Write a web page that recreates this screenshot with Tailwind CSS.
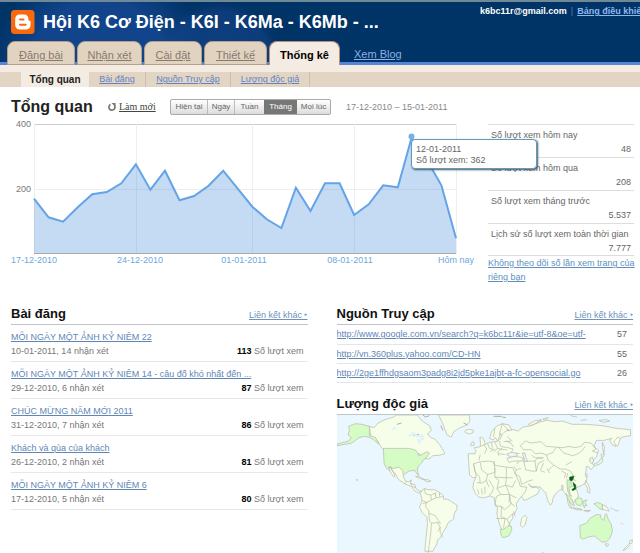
<!DOCTYPE html>
<html lang="vi">
<head>
  <meta charset="UTF-8">
  <meta name="viewport" content="width=device-width, initial-scale=1.0">
  <title>Hội K6 Cơ Điện - Thống kê</title>
  <script src="https://cdn.jsdelivr.net/npm/@tailwindcss/browser@4"></script>
</head>
<body class="bg-white font-['Liberation_Sans',Arial,sans-serif] text-[9px] leading-[14px] text-[#666] overflow-x-hidden">

  <!-- Header -->
  <header class="bg-[#003366] bg-[radial-gradient(circle_at_100px_70px,#11448a_0,#11448a_70px,transparent_110px),radial-gradient(circle_at_220px_60px,#0e4080_0,#0c3c7a_50px,transparent_60px)] border-t-2 border-[#6f8a96]">
    <div class="flex h-[39px] pl-[11px]">
      <div class="flex flex-1 items-center gap-2 min-w-0 whitespace-nowrap">
        <svg class="w-6 h-6 shrink-0" viewBox="0 0 24 24" aria-hidden="true">
          <rect x="0" y="0" width="23.500" height="24" rx="3.500" fill="#f96a0e"/>
          <path d="M8.500 4.500h4.500c2.700 0 4.400 1.900 4.400 4.200 0 1.500.2 2 1.200 2 .8.100 1 .5 1 1.200v3c0 2.700-1.900 4.600-4.600 4.600H8.700c-2.700 0-4.500-1.900-4.500-4.600V9c0-2.600 1.800-4.500 4.300-4.500z" fill="#fff"/>
          <path d="M9 9.500h3.500M9 14.800h5.700" stroke="#f96a0e" stroke-width="2" stroke-linecap="round"/>
        </svg>
        <h1 class="text-[18px] leading-6 font-bold text-white">Hội K6 Cơ Điện - K6I - K6Ma - K6Mb - ...</h1>
      </div>
      <div class="flex gap-1 w-40 pt-[2px] overflow-hidden whitespace-nowrap font-bold text-white">k6bc11r@gmail.com <span class="font-normal text-[#5c7fa8]">|</span> <a href="#" class="text-[#8fb8ee] underline">Bảng điều khiển</a></div>
    </div>

    <nav class="flex gap-[2px] h-6 pl-[7px] border-b-[3px] border-[#5b84d6] text-[11px]">
      <a href="#" class="h-6 w-[68px] rounded-t-lg bg-[#e2d3c0] border border-[#b5a08c] text-center leading-[26px] text-[#857a70] underline">Đăng bài</a>
      <a href="#" class="h-6 w-[65px] rounded-t-lg bg-[#e2d3c0] border border-[#b5a08c] text-center leading-[26px] text-[#857a70] underline">Nhận xét</a>
      <a href="#" class="h-6 w-[58px] rounded-t-lg bg-[#e2d3c0] border border-[#b5a08c] text-center leading-[26px] text-[#857a70] underline">Cài đặt</a>
      <a href="#" class="h-6 w-[63px] rounded-t-lg bg-[#e2d3c0] border border-[#b5a08c] text-center leading-[26px] text-[#857a70] underline">Thiết kế</a>
      <a href="#" class="h-6 w-[71px] rounded-t-lg bg-[#f4ebe2] border border-b-0 border-[#b5917c] text-center leading-[26px] font-bold text-black">Thống kê</a>
      <a href="#" class="ml-3 leading-[27px] text-[#8fb0e4] underline">Xem Blog</a>
    </nav>
  </header>

  <nav class="bg-[#f4ebe2] pt-[7px]">
    <div class="flex h-[15px] pl-[21px] bg-[#e2d5c3] leading-[15px]">
      <a href="#" class="w-[68px] text-center bg-[#f4ebe2] font-bold text-[10px] text-[#222]">Tổng quan</a>
      <a href="#" class="w-[57px] text-center border-r border-[#cdbfae] text-[#6483c4] underline">Bài đăng</a>
      <a href="#" class="w-[85px] text-center border-r border-[#cdbfae] text-[#6483c4] underline">Nguồn Truy cập</a>
      <a href="#" class="w-[79px] text-center border-r border-[#cdbfae] text-[#6483c4] underline">Lượng độc giả</a>
    </div>
  </nav>

  <main>
    <!-- Title and range -->
    <div class="flex items-center h-[37px] pt-[2px] pl-[11px]">
      <h2 class="w-[97px] text-[16px] leading-5 font-bold text-[#222]">Tổng quan</h2>
      <a href="#" class="flex items-center gap-[3px] w-[62px] font-['Liberation_Serif',serif] text-[10px] text-[#444]">
        <svg class="w-2 h-2" viewBox="0 0 8 8" aria-hidden="true">
          <path d="M2.500 1.500A3 3 0 1 0 6.300 2.300" fill="none" stroke="#777" stroke-width="1.700"/>
          <path d="M3.500 0h4v4z" fill="#777"/>
        </svg>
        <span class="underline">Làm mới</span>
      </a>
      <div class="flex h-4 w-[161px] border border-[#aaa] rounded-xs bg-linear-to-b from-white to-[#ddd] text-[8px] leading-[14px] text-[#666]">
        <button type="button" class="w-9 whitespace-nowrap">Hiện tại</button>
        <button type="button" class="w-[27px] border-l border-[#bbb]">Ngày</button>
        <button type="button" class="w-[30px] border-l border-[#bbb]">Tuần</button>
        <button type="button" class="w-[33px] bg-[#777] text-white">Tháng</button>
        <button type="button" class="flex-1 whitespace-nowrap">Mọi lúc</button>
      </div>
      <span class="ml-[15px] text-[#888]">17-12-2010 – 15-01-2011</span>
    </div>

    <!-- Chart and totals -->
    <div class="flex pl-[11px] pr-[2px] gap-[14px]">
      <div class="relative flex-1 min-w-0">
        <svg class="block w-full overflow-visible" viewBox="11 124 463 143" font-family="Liberation Sans, Arial, sans-serif" font-size="9">
          <path d="M34 124.500H456" stroke="#ccc"/>
          <path d="M34 189.500H456M34.500 124V254M136.500 124V254M252.500 124V254M354.500 124V254M456.500 124V254" stroke="#eee" fill="none"/>
          <path d="M34 198.700L48.600 217.300 63.100 221.700 77.700 207.300 92.200 194.300 106.800 192 121.300 183.300 135.900 164.300 150.400 189.700 165 170.700 179.500 200.300 194.100 196 208.600 185.700 223.200 170.700 237.700 188.700 252.300 206.700 266.800 219.300 281.400 228 295.900 187.700 310.500 211 325 183.300 339.600 183.300 354.100 215 368.700 204.300 383.200 185.300 397.800 187.300 411.500 138 426.900 160 441.400 185.300 456 238.300V254H34z" fill="#4a90dc" fill-opacity=".32"/>
          <path d="M34 198.700L48.600 217.300 63.100 221.700 77.700 207.300 92.200 194.300 106.800 192 121.300 183.300 135.900 164.300 150.400 189.700 165 170.700 179.500 200.300 194.100 196 208.600 185.700 223.200 170.700 237.700 188.700 252.300 206.700 266.800 219.300 281.400 228 295.900 187.700 310.500 211 325 183.300 339.600 183.300 354.100 215 368.700 204.300 383.200 185.300 397.800 187.300 411.500 138 426.900 160 441.400 185.300 456 238.300" fill="none" stroke="#64a4e6" stroke-width="2"/>
          <path d="M34 253.500H456" stroke="#aaa"/>
          <circle cx="411.500" cy="136.500" r="3" fill="#74b0ea"/>
          <g fill="#777" text-anchor="end">
            <text x="31" y="127">400</text>
            <text x="31" y="192">200</text>
          </g>
          <g fill="#6fa8dc" text-anchor="middle">
            <text x="34" y="263">17-12-2010</text>
            <text x="140" y="263">24-12-2010</text>
            <text x="244" y="263">01-01-2011</text>
            <text x="350" y="263">08-01-2011</text>
            <text x="456" y="263">Hôm nay</text>
          </g>
        </svg>
        <div class="absolute z-10 left-[400px] top-[15px] w-[126px] h-[30px] pl-1 pt-[4px] bg-white border border-[#5f9cb8] rounded-sm shadow-[1px_1px_2px_#456] leading-[11px] text-[#666]">
          <p>12-01-2011</p>
          <p>Số lượt xem: 362</p>
        </div>
      </div>

      <aside class="w-[150px]">
        <dl class="mr-1">
          <div class="h-[33px] pt-[3px] px-[3px] border-t border-[#ddd]"><dt>Số lượt xem hôm nay</dt><dd class="text-right">48</dd></div>
          <div class="h-[33px] pt-[3px] px-[3px] border-t border-[#ddd]"><dt>Số lượt xem hôm qua</dt><dd class="text-right">208</dd></div>
          <div class="h-[33px] pt-[3px] px-[3px] border-t border-[#ddd]"><dt>Số lượt xem tháng trước</dt><dd class="text-right">5.537</dd></div>
          <div class="h-[33px] pt-[3px] px-[3px] border-y border-[#ddd]"><dt>Lịch sử số lượt xem toàn thời gian</dt><dd class="text-right">7.777</dd></div>
        </dl>
        <a href="#" class="block text-[#5f8fc0] underline">Không theo dõi số lần xem trang của riêng bạn</a>
      </aside>
    </div>

    <div class="flex gap-[29px] pl-[11px] pr-[7px] pt-[21px]">
      <!-- Posts -->
      <section class="flex-1 min-w-0">
        <div class="flex items-end justify-between h-5 pb-[2px] border-b border-[#bcc6ca]">
          <h3 class="text-[13px] leading-4 font-bold text-[#111]">Bài đăng</h3>
          <a href="#" class="text-[#6d93b8] underline">Liên kết khác ‣</a>
        </div>
        <ul>
          <li class="h-[37px] pt-[5px] border-b border-[#e8e8e8]">
            <a href="#" class="block text-[#5f87b5] underline">MỖI NGÀY MỘT ẢNH KỶ NIỆM 22</a>
            <p class="flex justify-between pr-1 text-[#777]"><span>10-01-2011, 14 nhận xét</span><span><b class="text-black">113</b> Số lượt xem</span></p>
          </li>
          <li class="h-[37px] pt-[5px] border-b border-[#e8e8e8]">
            <a href="#" class="block text-[#5f87b5] underline">MỖI NGÀY MỘT ẢNH KỶ NIỆM 14 - câu đố khó nhất đến ...</a>
            <p class="flex justify-between pr-1 text-[#777]"><span>29-12-2010, 6 nhận xét</span><span><b class="text-black">87</b> Số lượt xem</span></p>
          </li>
          <li class="h-[37px] pt-[5px] border-b border-[#e8e8e8]">
            <a href="#" class="block text-[#5f87b5] underline">CHÚC MỪNG NĂM MỚI 2011</a>
            <p class="flex justify-between pr-1 text-[#777]"><span>31-12-2010, 7 nhận xét</span><span><b class="text-black">86</b> Số lượt xem</span></p>
          </li>
          <li class="h-[37px] pt-[5px] border-b border-[#e8e8e8]">
            <a href="#" class="block text-[#5f87b5] underline">Khách và qùa của khách</a>
            <p class="flex justify-between pr-1 text-[#777]"><span>26-12-2010, 2 nhận xét</span><span><b class="text-black">81</b> Số lượt xem</span></p>
          </li>
          <li class="h-[37px] pt-[5px] border-b border-[#e8e8e8]">
            <a href="#" class="block text-[#5f87b5] underline">MỖI NGÀY MỘT ẢNH KỶ NIỆM 6</a>
            <p class="flex justify-between pr-1 text-[#777]"><span>17-12-2010, 5 nhận xét</span><span><b class="text-black">80</b> Số lượt xem</span></p>
          </li>
        </ul>
      </section>

      <section class="flex-1 min-w-0">
        <!-- Traffic sources -->
        <div class="flex items-end justify-between h-5 pb-[2px] border-b border-[#bcc6ca]">
          <h3 class="text-[13px] leading-4 font-bold text-[#111]">Nguồn Truy cập</h3>
          <a href="#" class="text-[#6d93b8] underline">Liên kết khác ‣</a>
        </div>
        <table class="w-full table-fixed">
          <tbody>
            <tr class="h-[19px] border-b border-[#e3e6e8]"><td class="overflow-hidden whitespace-nowrap"><a href="#" class="text-[#5f87b5] underline">http://www.google.com.vn/search?q=k6bc11r&amp;ie=utf-8&amp;oe=utf-</a></td><td class="w-[42px] pr-[6px] text-right">57</td></tr>
            <tr class="h-[19px] border-b border-[#e3e6e8]"><td class="overflow-hidden whitespace-nowrap"><a href="#" class="text-[#5f87b5] underline">http://vn.360plus.yahoo.com/CD-HN</a></td><td class="w-[42px] pr-[6px] text-right">55</td></tr>
            <tr class="h-[19px] border-b border-[#e3e6e8]"><td class="overflow-hidden whitespace-nowrap"><a href="#" class="text-[#5f87b5] underline">http://2ge1ffhdgsaom3padg8i2jd5pke1ajbt-a-fc-opensocial.go</a></td><td class="w-[42px] pr-[6px] text-right">26</td></tr>
          </tbody>
        </table>

        <!-- Audience -->
        <div class="flex items-end justify-between mt-[12px] h-5 pb-[2px] border-b border-[#bcc6ca]">
          <h3 class="text-[13px] leading-4 font-bold text-[#111]">Lượng độc giả</h3>
          <a href="#" class="text-[#6d93b8] underline">Liên kết khác ‣</a>
        </div>
        <svg class="block w-full bg-[#eaf7fe]" viewBox="0 0 888 417" stroke="#b5b5a5" stroke-width="2" stroke-linejoin="round" fill="#f6feea" role="img" aria-label="Bản đồ độc giả">
          <!-- Americas -->
          <g transform="translate(-21 -12)">
            <path d="M118 46l14 4 12-14 20-10 22-6 14-8h62l14 18 22 14 6 14-12 10 10 12 12 4 14 16 12 20 4 8-14 4-22 2-12 10-18-2-10-14-10 2-20-6-70-1-14-14-12-20-10-6-10-8z"/>
            <path d="M325 12h92l2 20-14 12-16 6-18 12-8 16-12-6-8-20-6-16-6-12z"/>
            <path d="M404 60l10-5 14 2 2 6-12 6-12-4z"/>
            <path d="M118 46l-22-6-20-2-20 8 2 12-4 14 10 8-8 10-35 9v5l44-8 22-16 16-4 15 3 14 8 14 12-10-20-18-5z" fill="#d6fcc6"/>
            <path d="M160 112h78l20 6 8 16 10-4 14-8 8 4-8 12-10 8-6 10-10 10-2 12 4 16-6-6-6-10-18 2-14 10-10-8-12-4-20 2-12-10-6-14z" fill="#d6fcc6"/>
            <path d="M176 168l14 4 16-4 12 10 2 20 6 12 10 2 8-6-4 12 14 2 4 14 10 6 6 0-8 6-12-6-10-14-20-8-20-14-8-16-12-12-2-8zM176 168l4 14 12 16 2-6-12-24zM256 196l14 2 14 8-10-2zM282 206l12 0 8 4-12 2z"/>
            <path d="M240 212l6 12M222 218l8-6M246 226l12 4"/>
            <path d="M270 246l12-14 12 4 20 0 14 8 12 10 0 10 12 0 28 18 0 12-8 14-2 16-16 10-6 14-10 16-6 14-10 8-2 12-8 14-4 8-24 0 4-44 4-38-2-20-14-14-8-16 4-10 4-8-2-12z"/>
            <path d="M282 232l4 16 16 4 2 14-14 8-14-6M302 252l12-6 4 14 20-4M318 260l-14 6M290 274l-4 12 10 12 0 8 20 8 8 14 6 6M296 306l2 24 6 6 18-2 8 14-6 12M304 336l-2 28-4 30-4 34M330 348l0 18 8 12M322 334l10 2M290 274l-12 4M318 244l-2 8M328 244v12" fill="none"/>
            <path d="M278 12l8 6 12-4M200 40l14-4M250 74l14-4 10 8M332 44l6 14M400 36l12 6" fill="none" stroke="#888"/>
            <path d="M186 54l12-4M236 76l14-10 12 10 14-4 2 12-16 4M264 90l8 6" fill="none" stroke="#e2f2fb" stroke-width="7"/>
            <path d="M80 205h2v3h-2z"/>
          </g>

          <!-- Europe, Africa, Asia and Oceania -->
          <g transform="translate(429 -12)">
            <path d="M28 82l6-20 14-16 18-8 20 4 8 14-4 4-8-6-2 14-6 10-10-2-4-10-4 14-4 10-6-10-8 6z"/>
            <path d="M-1 78l10 4 6 16 6 8-16 4-4-8zM-28 96l8-4 2 10-10 2z"/>
            <path d="M-36 128l20 0 4-10-6-8 14-2 14-6 14-6 14-4 12 0 10-8 6-14 10-10 24-4 14 4 14-12 24-4 24-10 22-6 28 4 20-2 30 10 40 0 50 4 42 8 42 4v18l-26 4-14 16-4 12-10-4-8-12 6-8-24 6-22 0-8 18 14 12-6 20-14 12 6 16-8 10-6-8-8-2-2 18 4 14-4 16-14 10-16 6 4 10 4 14-6 14-12 6-2-10-8-4 0 10 8 22-8-6-4-14-2-18-8-10-6-8-8 0-10 10-10 14-2 14-6 8-8-14-6-24-8-6-8-10-26-2-10-8 10 12 14-2 10 8-6 12-18 10-22 10-6-8-14-26-10-14 2-12-28 2-10-6 10-6-4-4 8-2-14-4-8 12-4 4-8-10-12-12-14-2-10 6-8 4-8 8-16 2-10-8z"/>
            <path d="M-20 158l20-6 24-2 14 2 4 10 20 4 16 2 20 2 4 12 14 30 4 14 20 2-6 16-18 20-8 14 2 14-6 14-8 4 2 10-8 12-8 18-16 6-6-10-6-20-4-18 2-18-8-14-2-16-12-6-18 6-16-2-10-10-8-18 2-16 8-18z"/>
            <path d="M124 322l10-10 6 6-6 24-8 6-6-6z"/>
            <path d="M60 354l10 0 14-10 10 2 0 12-8 16-18 6-6-10z" fill="#d6fcc6"/>
            <!-- African borders -->
            <path d="M-20 158l4 24 14 16M0 154l4 22 18 14M22 190l22-6-2-34M44 170l0 28 34 2M78 168v32l20 0M22 190l-4 18-14 8-14-2M-2 198l2 18M18 208l8 20M26 206l14 24M44 198l12 10-6 24 12 18M78 200l-2 22-26 10M76 222l20 6 10-20M76 222l12 28M40 230l-6 16-8 6M62 250l-14 6-4 28M62 250h26l4 30M88 250l20 10M44 284l20 2 8 10 20-16M64 286l-2 30 18 8 20-18M48 322h26M74 322l-4 28M100 300l4 16M80 324l10 20M90 274l14 12M-8 234l4 16M4 232l2 18M14 226l0 22M88 250l-2 24" fill="none"/>
            <!-- European borders -->
            <path d="M44 52l-4 26M66 38l-8 30M66 38l20 22M10 100l10 14-8 14M22 98l6 14 14 4M34 94l2 16M44 94l8 18-12 10M58 90l2 14 16 6M66 110l-14 12 4 12M76 108l22 6-4 8M78 90l14 6 8 12M80 76l16 14M52 112l16 4 12 0M54 128l20 2M30 122l12-8M0 130l-4 18M70 92l22-2" fill="none"/>
            <!-- Asian borders -->
            <path d="M130 116l-10-12 16-14 16 6 30-4 14 14 30 2 20 2 20-4 16 4 20-4 10-12 20 2 14 18-10 6 16 6M234 108l16 18 28 8 18-8 10-8 8-12M228 108l-10 16-20 8-14-6-18 2-14-12-22 0M198 132l6 16 16 14 20 12 16 0 14 6 8 14 8 2M130 150l34 0 8-10 18 0M130 150l6 26 18 4 14 0 6-24 18-8M164 150l4 30M190 156l-10 22 14 6M220 162l-16 16M200 172l8 14M154 132l10 8 22 2M100 166l8 10-4 12 14 8 6 24 20-10 14-4M108 176l14-4M244 180l12 6-4 14M262 186l-4 16M278 190l-4 14 12 4M274 152l-18 10M84 140l30 4 14-2 0 10M104 126l14 2M116 150l-6 10" fill="none"/>
            <path d="M80 142l18-6 22 2 10 4-8 8-22 0-14 4z"/>
            <path d="M78 130l14-6 16 2 4 8-20 4zM126 126l8 0 2 12 6 12-8 2-4-14z" fill="#eaf7fe"/>
            <path d="M400 92l12-14 8 4-8 22-6 0zM144 40l18-10 22-4-20 12-14 6zM188 24l16-4-10 8zM270 14l20 4M300 28l20-2M356 28l22-2 10 4-20 4z"/>
            <path d="M366 94l6 14-2 18-4-16z"/>
            <!-- Japan and Korea -->
            <path d="M362 130l10-2-2 8-6 4zM364 140l4 10-8 8-16 6-4-4 14-8zM328 142l8-4 4 12-6 8-6-6z" fill="#dffbe0"/>
            <path d="M316 186l4 4-2 8-4-4zM316 208l6 10 6 14 0 14-8-4 2-10-8-12zM244 222l4 2 0 12-4-2z"/>
            <!-- Thailand, Vietnam -->
            <path d="M260 206l8 2 6 12 2 6-10 4 2 16 6 10-6-2-6-14-2-18z" fill="#c9f5bd"/>
            <path d="M268 198l12-2-2 8-4 6-6-4zM278 214l8 8 0 12-8 4-4-2 8-6-2-8z" fill="#0a5a18" stroke="#0a5a18"/>
            <!-- Indonesia -->
            <path d="M256 248l10 8 10 12 6 16-8-4-10-14zM284 266l12-6 8 2 2 12-6 10-12-4zM276 290l20 2 10 4-18 0zM308 270l12-4-6 8 6 10-6-2-2 8-4-8zM310 298l20 0-8 4zM340 278l12-4 14 6 0 16-10-4-10-10z" fill="#d6fcc6"/>
            <path d="M366 280l14 8 6 12-20-6zM390 290l8 4M400 296l14 4M422 334l6 6"/>
            <!-- Australia, New Zealand -->
            <path d="M298 344l20-8 10-14 16-10 6-2 12 2-2 8 10 8 4-18 4-2 6 18 8 12 4 22-8 22-10 10-14 0-10-8-6-4-6-6-20 4-14 6-8-4z" fill="#d6fcc6"/>
            <path d="M374 398l10 0-2 8-6-2zM448 388l8-2-2 10-8 2zM444 400l4 4-12 10-8 4 6-8z"/>
            <path d="M186 424l4 2M40 16l24 0M66 18l10 2" stroke="#888"/>
          </g>
        </svg>
      </section>
    </div>
  </main>
</body>
</html>
